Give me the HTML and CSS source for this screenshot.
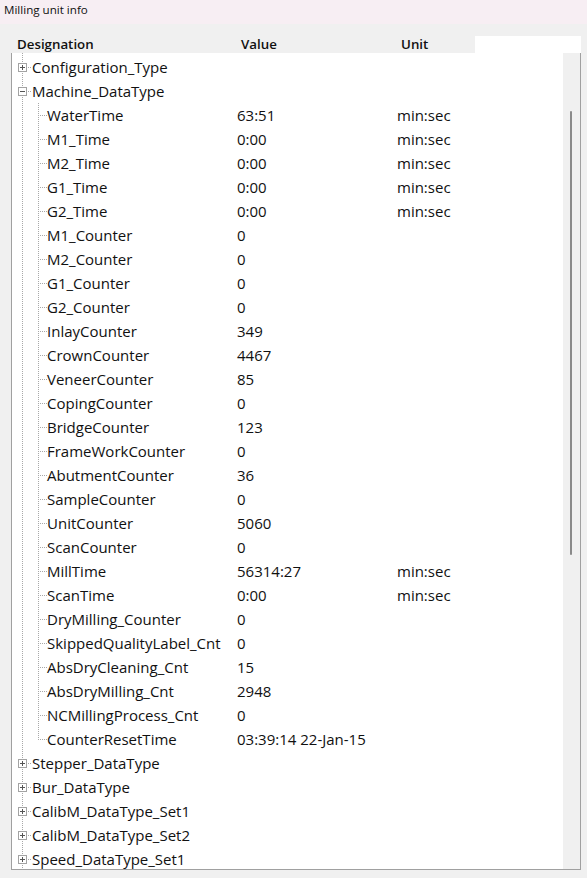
FILE: index.html
```html
<!DOCTYPE html>
<html lang="en">
<head>
  <meta charset="UTF-8">
  <title>Milling unit info</title>
  <link rel="stylesheet" href="styles.css">
</head>
<body>
  <div class="title-bar">Milling unit info</div>

  <div class="panel">
    <div class="header">
      <div class="header-cols">
        <span>Designation</span>
        <span>Value</span>
        <span>Unit</span>
      </div>
      <div class="header-rest"></div>
    </div>

    <div class="tree">
      <div class="rows">
        <div class="row top"><span class="name"><svg class="node" width="9" height="9"><rect x="0.5" y="0.5" width="8" height="8" fill="#fff" stroke="#a3a3a3"/><path d="M2 4.5h5M4.5 2v5" stroke="#555"/></svg>Configuration_Type</span><span></span><span></span></div>
        <div class="row top"><span class="name"><svg class="node" width="9" height="9"><rect x="0.5" y="0.5" width="8" height="8" fill="#fff" stroke="#a3a3a3"/><path d="M2 4.5h5" stroke="#555"/></svg>Machine_DataType</span><span></span><span></span></div>
        <div class="row child"><span class="name">WaterTime</span><span>63:51</span><span>min:sec</span></div>
        <div class="row child"><span class="name">M1_Time</span><span>0:00</span><span>min:sec</span></div>
        <div class="row child"><span class="name">M2_Time</span><span>0:00</span><span>min:sec</span></div>
        <div class="row child"><span class="name">G1_Time</span><span>0:00</span><span>min:sec</span></div>
        <div class="row child"><span class="name">G2_Time</span><span>0:00</span><span>min:sec</span></div>
        <div class="row child"><span class="name">M1_Counter</span><span>0</span><span></span></div>
        <div class="row child"><span class="name">M2_Counter</span><span>0</span><span></span></div>
        <div class="row child"><span class="name">G1_Counter</span><span>0</span><span></span></div>
        <div class="row child"><span class="name">G2_Counter</span><span>0</span><span></span></div>
        <div class="row child"><span class="name">InlayCounter</span><span>349</span><span></span></div>
        <div class="row child"><span class="name">CrownCounter</span><span>4467</span><span></span></div>
        <div class="row child"><span class="name">VeneerCounter</span><span>85</span><span></span></div>
        <div class="row child"><span class="name">CopingCounter</span><span>0</span><span></span></div>
        <div class="row child"><span class="name">BridgeCounter</span><span>123</span><span></span></div>
        <div class="row child"><span class="name">FrameWorkCounter</span><span>0</span><span></span></div>
        <div class="row child"><span class="name">AbutmentCounter</span><span>36</span><span></span></div>
        <div class="row child"><span class="name">SampleCounter</span><span>0</span><span></span></div>
        <div class="row child"><span class="name">UnitCounter</span><span>5060</span><span></span></div>
        <div class="row child"><span class="name">ScanCounter</span><span>0</span><span></span></div>
        <div class="row child"><span class="name">MillTime</span><span>56314:27</span><span>min:sec</span></div>
        <div class="row child"><span class="name">ScanTime</span><span>0:00</span><span>min:sec</span></div>
        <div class="row child"><span class="name">DryMilling_Counter</span><span>0</span><span></span></div>
        <div class="row child"><span class="name">SkippedQualityLabel_Cnt</span><span>0</span><span></span></div>
        <div class="row child"><span class="name">AbsDryCleaning_Cnt</span><span>15</span><span></span></div>
        <div class="row child"><span class="name">AbsDryMilling_Cnt</span><span>2948</span><span></span></div>
        <div class="row child"><span class="name">NCMillingProcess_Cnt</span><span>0</span><span></span></div>
        <div class="row child last"><span class="name">CounterResetTime</span><span>03:39:14 22-Jan-15</span><span></span></div>
        <div class="row top"><span class="name"><svg class="node" width="9" height="9"><rect x="0.5" y="0.5" width="8" height="8" fill="#fff" stroke="#a3a3a3"/><path d="M2 4.5h5M4.5 2v5" stroke="#555"/></svg>Stepper_DataType</span><span></span><span></span></div>
        <div class="row top"><span class="name"><svg class="node" width="9" height="9"><rect x="0.5" y="0.5" width="8" height="8" fill="#fff" stroke="#a3a3a3"/><path d="M2 4.5h5M4.5 2v5" stroke="#555"/></svg>Bur_DataType</span><span></span><span></span></div>
        <div class="row top"><span class="name"><svg class="node" width="9" height="9"><rect x="0.5" y="0.5" width="8" height="8" fill="#fff" stroke="#a3a3a3"/><path d="M2 4.5h5M4.5 2v5" stroke="#555"/></svg>CalibM_DataType_Set1</span><span></span><span></span></div>
        <div class="row top"><span class="name"><svg class="node" width="9" height="9"><rect x="0.5" y="0.5" width="8" height="8" fill="#fff" stroke="#a3a3a3"/><path d="M2 4.5h5M4.5 2v5" stroke="#555"/></svg>CalibM_DataType_Set2</span><span></span><span></span></div>
        <div class="row top"><span class="name"><svg class="node" width="9" height="9"><rect x="0.5" y="0.5" width="8" height="8" fill="#fff" stroke="#a3a3a3"/><path d="M2 4.5h5M4.5 2v5" stroke="#555"/></svg>Speed_DataType_Set1</span><span></span><span></span></div>
      </div>
      <div class="scrollbar">
        <div class="thumb"></div>
      </div>
    </div>
  </div>
</body>
</html>
```

FILE: styles.css
```css
/* Milling unit info window */

body {
  margin: 0;
  background-color: #f0f0f0;
  font-family: "Open Sans", "Noto Sans", sans-serif;
  color: #111;
}

.title-bar {
  height: 24px;
  line-height: 19px;
  padding-left: 4px;
  font-size: 11.6px;
  background-color: #f7eef3;
}

.panel {
  padding: 12px 6px 0 11px;
}

/* Column header */

.header {
  display: flex;
  height: 17px;
  margin-left: 1px;
}

.header-cols {
  display: grid;
  grid-template-columns: 224px 160px 1fr;
  width: 463px;
  padding-left: 5px;
  box-sizing: border-box;
  font-size: 13.3px;
  font-weight: 600;
  line-height: 17px;
}

.header-rest {
  flex: 1;
  background-color: #fff;
}

/* Tree view */

.tree {
  display: flex;
  height: 816px;
  border: 1px solid #a0a0a0;
  border-top: none;
}

.rows {
  flex: 1;
  overflow: hidden;
  padding-top: 2px;
  background:
    repeating-linear-gradient(to bottom, #a8a8a8 0 1px, transparent 1px 2px) 10px 0 / 1px 100% no-repeat,
    #fff;
}

.row {
  display: grid;
  grid-template-columns: 225px 160px 1fr;
  align-items: center;
  height: 24px;
  font-size: 15px;
  white-space: nowrap;
}

.row .name {
  display: flex;
  align-items: center;
}

.top .name {
  padding-left: 6px;
}

.top {
  background: repeating-linear-gradient(to right, #a8a8a8 0 1px, transparent 1px 2px) 12px 12px / 8px 1px no-repeat;
}

.node {
  margin-right: 5px;
  flex-shrink: 0;
}

.child .name {
  padding-left: 35px;
}

.child {
  background:
    repeating-linear-gradient(to bottom, #a8a8a8 0 1px, transparent 1px 2px) 26px 0 / 1px 100% no-repeat,
    repeating-linear-gradient(to right, #a8a8a8 0 1px, transparent 1px 2px) 28px 12px / 7px 1px no-repeat;
}

.child.last {
  background-size: 1px 13px, 7px 1px;
}

/* Scrollbar */

.scrollbar {
  width: 17px;
  background-color: #f0f0f0;
}

.thumb {
  width: 2px;
  height: 444px;
  margin: 58px 0 0 7px;
  border-radius: 1px;
  background-color: #8a8a8a;
}
```
